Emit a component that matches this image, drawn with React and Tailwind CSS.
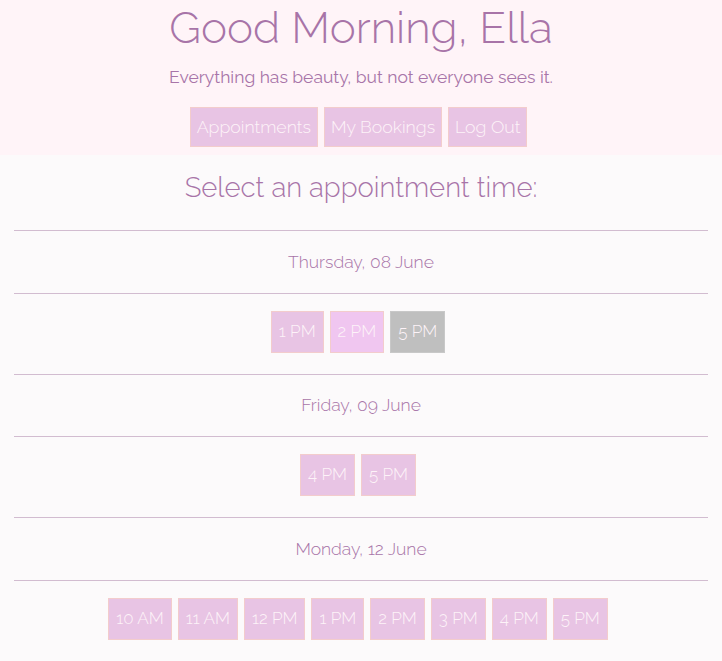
import React from 'react';

const days = [
    { label: 'Thursday, 08 June', slots: [{ t: '1 PM' }, { t: '2 PM', hover: true }, { t: '5 PM', taken: true }] },
    { label: 'Friday, 09 June', slots: [{ t: '4 PM' }, { t: '5 PM' }] },
    {
        label: 'Monday, 12 June',
        slots: ['10 AM', '11 AM', '12 PM', '1 PM', '2 PM', '3 PM', '4 PM', '5 PM'].map(t => ({ t })),
    },
];

const SlotButton = ({ slot }) => {
    const bg = slot.taken ? 'bg-[#bfbfbf] border-[#c8c8c8]' : slot.hover ? 'bg-[#f0c6f0] border-[#f3cccc]' : 'bg-[#e8c4e4] border-[#f3cccc]';
    return (
        <button className={`${bg} border px-[7px] h-[42px] text-[17px] text-[#fdf3f8] font-light`}>
            {slot.t}
        </button>
    );
};

export default function App() {
    return (
        <div className="min-h-screen bg-[#fcfafb] text-[#a874a8]" style={{ fontFamily: 'Raleway, Lato, sans-serif' }}>
            {/* Header */}
            <header className="bg-[#fff4f8] h-[155px] flex flex-col items-center">
                <h1 className="text-[44px] leading-none mt-[6px] font-light">Good Morning, Ella</h1>
                <p className="text-[17.5px] mt-[14px]">Everything has beauty, but not everyone sees it.</p>
                <nav className="flex gap-[6px] mt-[17px] pr-[5px]">
                    {['Appointments', 'My Bookings', 'Log Out'].map(n => (
                        <button key={n} className="bg-[#e8c4e4] border border-[#f3cccc] h-[40px] px-[6px] text-[17.7px] text-[#fdf3f8] font-light">
                            {n}
                        </button>
                    ))}
                </nav>
            </header>

            <main className="px-[14px]">
                <h2 className="text-center text-[27.5px] font-light mt-[16px] mb-[27px] leading-[32px]">Select an appointment time:</h2>
                {days.map(d => (
                    <section key={d.label}>
                        <div className="border-t border-b border-[#d2bcd0] h-[63.5px] flex items-center justify-center text-[17.5px] font-light">
                            {d.label}
                        </div>
                        <div className="flex justify-center gap-[6px] pt-[17px] pb-[21px] pr-[6px]">
                            {d.slots.map(s => <SlotButton key={s.t} slot={s} />)}
                        </div>
                    </section>
                ))}
            </main>
        </div>
    );
}
